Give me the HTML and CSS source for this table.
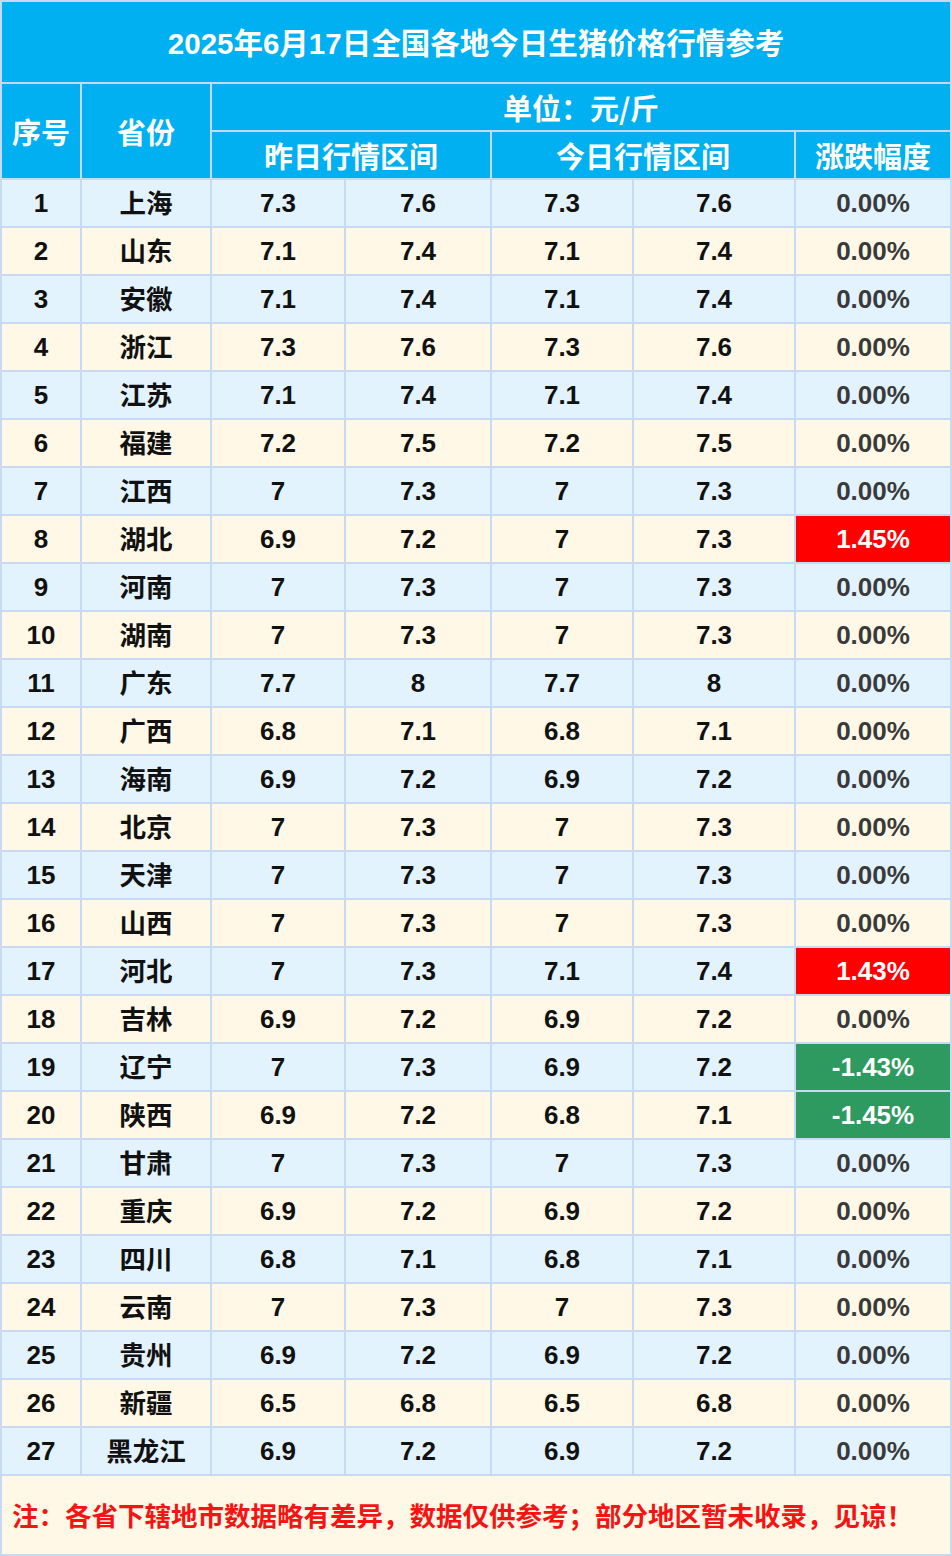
FILE: index.html
```html
<!DOCTYPE html>
<html lang="zh-CN">
<head>
<meta charset="utf-8">
<title>生猪价格行情参考</title>
<link rel="stylesheet" href="styles.css">
</head>
<body>
<div class="sheet">
  <div class="title">2025年6月17日全国各地今日生猪价格行情参考</div>
  <div class="head">
    <div class="hc h-no">序号</div>
    <div class="hc h-prov">省份</div>
    <div class="hc h-unit">单位：元/斤</div>
    <div class="hc h-yest">昨日行情区间</div>
    <div class="hc h-today">今日行情区间</div>
    <div class="hc h-chg">涨跌幅度</div>
  </div>
  <div class="row b"><div>1</div><div class="prov">上海</div><div>7.3</div><div>7.6</div><div>7.3</div><div>7.6</div><div class="pct">0.00%</div></div>
  <div class="row c"><div>2</div><div class="prov">山东</div><div>7.1</div><div>7.4</div><div>7.1</div><div>7.4</div><div class="pct">0.00%</div></div>
  <div class="row b"><div>3</div><div class="prov">安徽</div><div>7.1</div><div>7.4</div><div>7.1</div><div>7.4</div><div class="pct">0.00%</div></div>
  <div class="row c"><div>4</div><div class="prov">浙江</div><div>7.3</div><div>7.6</div><div>7.3</div><div>7.6</div><div class="pct">0.00%</div></div>
  <div class="row b"><div>5</div><div class="prov">江苏</div><div>7.1</div><div>7.4</div><div>7.1</div><div>7.4</div><div class="pct">0.00%</div></div>
  <div class="row c"><div>6</div><div class="prov">福建</div><div>7.2</div><div>7.5</div><div>7.2</div><div>7.5</div><div class="pct">0.00%</div></div>
  <div class="row b"><div>7</div><div class="prov">江西</div><div>7</div><div>7.3</div><div>7</div><div>7.3</div><div class="pct">0.00%</div></div>
  <div class="row c"><div>8</div><div class="prov">湖北</div><div>6.9</div><div>7.2</div><div>7</div><div>7.3</div><div class="pct up">1.45%</div></div>
  <div class="row b"><div>9</div><div class="prov">河南</div><div>7</div><div>7.3</div><div>7</div><div>7.3</div><div class="pct">0.00%</div></div>
  <div class="row c"><div>10</div><div class="prov">湖南</div><div>7</div><div>7.3</div><div>7</div><div>7.3</div><div class="pct">0.00%</div></div>
  <div class="row b"><div>11</div><div class="prov">广东</div><div>7.7</div><div>8</div><div>7.7</div><div>8</div><div class="pct">0.00%</div></div>
  <div class="row c"><div>12</div><div class="prov">广西</div><div>6.8</div><div>7.1</div><div>6.8</div><div>7.1</div><div class="pct">0.00%</div></div>
  <div class="row b"><div>13</div><div class="prov">海南</div><div>6.9</div><div>7.2</div><div>6.9</div><div>7.2</div><div class="pct">0.00%</div></div>
  <div class="row c"><div>14</div><div class="prov">北京</div><div>7</div><div>7.3</div><div>7</div><div>7.3</div><div class="pct">0.00%</div></div>
  <div class="row b"><div>15</div><div class="prov">天津</div><div>7</div><div>7.3</div><div>7</div><div>7.3</div><div class="pct">0.00%</div></div>
  <div class="row c"><div>16</div><div class="prov">山西</div><div>7</div><div>7.3</div><div>7</div><div>7.3</div><div class="pct">0.00%</div></div>
  <div class="row b"><div>17</div><div class="prov">河北</div><div>7</div><div>7.3</div><div>7.1</div><div>7.4</div><div class="pct up">1.43%</div></div>
  <div class="row c"><div>18</div><div class="prov">吉林</div><div>6.9</div><div>7.2</div><div>6.9</div><div>7.2</div><div class="pct">0.00%</div></div>
  <div class="row b"><div>19</div><div class="prov">辽宁</div><div>7</div><div>7.3</div><div>6.9</div><div>7.2</div><div class="pct down">-1.43%</div></div>
  <div class="row c"><div>20</div><div class="prov">陕西</div><div>6.9</div><div>7.2</div><div>6.8</div><div>7.1</div><div class="pct down">-1.45%</div></div>
  <div class="row b"><div>21</div><div class="prov">甘肃</div><div>7</div><div>7.3</div><div>7</div><div>7.3</div><div class="pct">0.00%</div></div>
  <div class="row c"><div>22</div><div class="prov">重庆</div><div>6.9</div><div>7.2</div><div>6.9</div><div>7.2</div><div class="pct">0.00%</div></div>
  <div class="row b"><div>23</div><div class="prov">四川</div><div>6.8</div><div>7.1</div><div>6.8</div><div>7.1</div><div class="pct">0.00%</div></div>
  <div class="row c"><div>24</div><div class="prov">云南</div><div>7</div><div>7.3</div><div>7</div><div>7.3</div><div class="pct">0.00%</div></div>
  <div class="row b"><div>25</div><div class="prov">贵州</div><div>6.9</div><div>7.2</div><div>6.9</div><div>7.2</div><div class="pct">0.00%</div></div>
  <div class="row c"><div>26</div><div class="prov">新疆</div><div>6.5</div><div>6.8</div><div>6.5</div><div>6.8</div><div class="pct">0.00%</div></div>
  <div class="row b"><div>27</div><div class="prov">黑龙江</div><div>6.9</div><div>7.2</div><div>6.9</div><div>7.2</div><div class="pct">0.00%</div></div>
  <div class="note">注：各省下辖地市数据略有差异，数据仅供参考；部分地区暂未收录，见谅！</div>
</div>
</body>
</html>
```
FILE: styles.css
```css
html, body {
  margin: 0;
  padding: 0;
  background: #ffffff;
}

.sheet {
  width: 952px;
  box-sizing: border-box;
  padding: 2px;
  background: #c6daf4;
  display: flex;
  flex-direction: column;
  gap: 2px;
  font-family: "Liberation Sans", "Noto Sans CJK SC", Arial, sans-serif;
  font-weight: 700;
}

.title {
  height: 80px;
  box-sizing: border-box;
  padding-bottom: 3px;
  background: #00b0f0;
  color: #ffffff;
  font-size: 29.5px;
  display: flex;
  align-items: center;
  justify-content: center;
}

.head {
  display: grid;
  grid-template-columns: 78px 128px 132px 144px 140px 160px 154px;
  grid-template-rows: 46px 46px;
  gap: 2px;
}

.hc {
  background: #00b0f0;
  color: #ffffff;
  font-size: 29px;
  font-family: "Noto Sans CJK SC", "Liberation Sans", sans-serif;
  display: flex;
  align-items: center;
  justify-content: center;
  padding-bottom: 1px;
}

.h-no { grid-column: 1; grid-row: 1 / 3; }
.h-prov { grid-column: 2; grid-row: 1 / 3; }
.h-unit { grid-column: 3 / 8; grid-row: 1; }
.h-yest { grid-column: 3 / 5; grid-row: 2; }
.h-today { grid-column: 5 / 7; grid-row: 2; }
.h-chg { grid-column: 7; grid-row: 2; }

.row {
  display: grid;
  grid-template-columns: 78px 128px 132px 144px 140px 160px 154px;
  height: 46px;
  gap: 2px;
}

.row > div {
  display: flex;
  align-items: center;
  justify-content: center;
  font-size: 26px;
  color: #111111;
}

.row > div.prov {
  font-family: "Noto Sans CJK SC", "Liberation Sans", sans-serif;
  font-size: 26.5px;
  padding-bottom: 3px;
  box-sizing: border-box;
}

.row.b > div { background: #e3f3fe; }
.row.c > div { background: #fff8e6; }

.row > div.pct { color: #3a3a3a; }
.row > div.pct.up { background: #ff0000; color: #ffffff; }
.row > div.pct.down { background: #2e9a5f; color: #ffffff; }

.note {
  height: 78px;
  box-sizing: border-box;
  background: #fff8e6;
  color: #f41414;
  font-size: 26.5px;
  font-family: "Noto Sans CJK SC", "Liberation Sans", sans-serif;
  display: flex;
  align-items: center;
  padding-left: 10px;
  padding-bottom: 2px;
}
```
